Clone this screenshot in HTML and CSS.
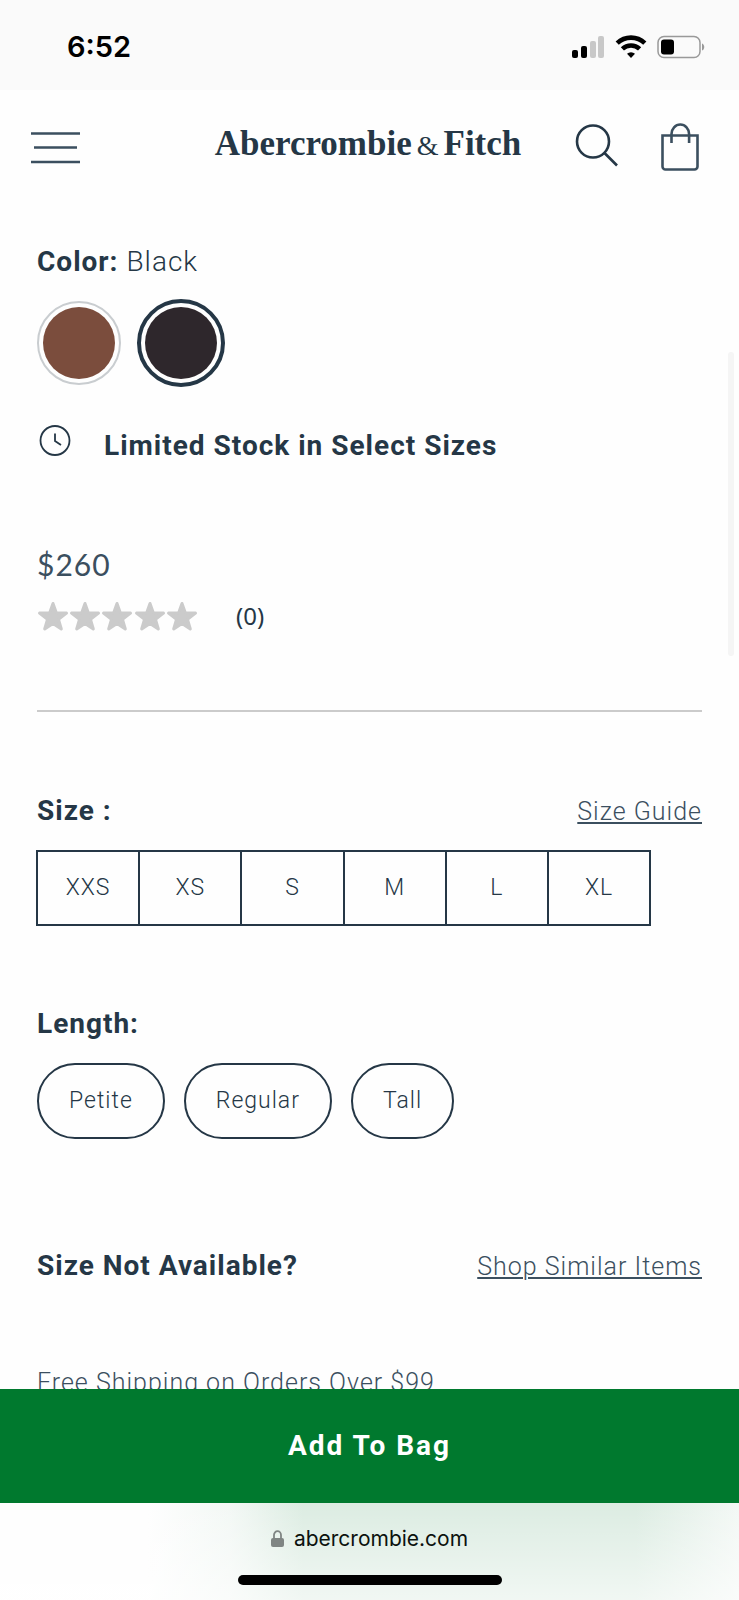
FILE: index.html
```html
<!DOCTYPE html>
<html lang="en">
<head>
    <meta charset="UTF-8">
    <meta name="viewport" content="width=device-width, initial-scale=1.0">
    <title>Abercrombie &amp; Fitch</title>
    <link rel="stylesheet" href="styles.css">
</head>
<body>

    <!-- Status Bar -->
    <div class="status-bar">
        <span class="time">6:52</span>
        <div class="status-icons">
            <svg width="34" height="24" viewBox="0 0 34 24">
                <rect x="1" y="15" width="6" height="8" rx="2" fill="#000"/>
                <rect x="10" y="11" width="6" height="12" rx="2" fill="#000"/>
                <rect x="19" y="6" width="6" height="17" rx="2" fill="#c8c8c8"/>
                <rect x="27" y="1" width="6" height="22" rx="2" fill="#c8c8c8"/>
            </svg>
            <svg width="32" height="24" viewBox="0 0 32 24" fill="none" stroke="#000" stroke-width="4.6">
                <path d="M2.2 8.1a20 20 0 0 1 27.600 0"/>
                <path d="M7.400 13.900a12.500 12.500 0 0 1 17.200 0"/>
                <path d="M16 23l-4-4.200a5.800 5.800 0 0 1 8 0z" fill="#000" stroke="none"/>
            </svg>
            <svg width="48" height="24" viewBox="0 0 48 24">
                <rect x="1" y="1.500" width="42" height="21" rx="6" fill="none" stroke="#999" stroke-width="1.500"/>
                <rect x="4" y="4.500" width="13" height="15" rx="3" fill="#000"/>
                <path d="M45 8.500c3 1 3 6 0 7z" fill="#999"/>
            </svg>
        </div>
    </div>

    <!-- Header -->
    <header class="header">
        <button class="icon-button" aria-label="Menu">
            <svg width="50" height="50" viewBox="0 0 50 50" stroke="#3b4f5f" stroke-width="2.500">
                <path d="M0 10.500h49M3 24.500h43M0 39h49"/>
            </svg>
        </button>
        <a class="logo" href="#">Abercrombie<span class="amp">&amp;</span>Fitch</a>
        <div class="header-actions">
            <button class="icon-button" aria-label="Search">
                <svg width="44" height="50" viewBox="0 0 44 50" fill="none" stroke="#253746" stroke-width="2.600">
                    <circle cx="18" cy="18.500" r="16"/>
                    <path d="M29.500 30L42 42.500"/>
                </svg>
            </button>
            <button class="icon-button" aria-label="Shopping bag">
                <svg width="38" height="50" viewBox="0 0 38 50" fill="none" stroke="#3b4f5f" stroke-width="2.600">
                    <path d="M1.500 12.500h35v31a3 3 0 0 1-3 3h-29a3 3 0 0 1-3-3z"/>
                    <path d="M10.500 20v-9a8.800 9.500 0 0 1 17.600 0v9"/>
                </svg>
            </button>
        </div>
    </header>

    <!-- Product Details -->
    <main class="product">
        <div class="product-color"><b>Color:</b> <span class="light">Black</span></div>
        <div class="swatches">
            <input class="swatch swatch-brown" type="radio" name="color" aria-label="Brown">
            <input class="swatch swatch-black" type="radio" name="color" aria-label="Black" checked>
        </div>

        <div class="stock">
            <svg width="34" height="34" viewBox="0 0 34 34" fill="none" stroke="#253746" stroke-width="1.800">
                <circle cx="18" cy="15.500" r="14.500"/>
                <path d="M18 8.500v7.500l6 4"/>
            </svg>
            <b>Limited Stock in Select Sizes</b>
        </div>

        <div class="price">$260</div>
        <div class="rating">
            <svg width="161" height="32" viewBox="0 0 161 32" fill="#cbcbcb" stroke="#cbcbcb" stroke-width="3" stroke-linejoin="round">
                <defs>
                    <path id="star" d="M16 3.500l3.300 9.200 10.200.400-8 6.200 2.800 9.700-8.300-5.600-8.300 5.600 2.800-9.700-8-6.200 10.200-.400z"/>
                </defs>
                <use href="#star" x="0"/>
                <use href="#star" x="32"/>
                <use href="#star" x="64"/>
                <use href="#star" x="97"/>
                <use href="#star" x="129"/>
            </svg>
            <span class="rating-count">(0)</span>
        </div>

        <hr class="divider">

        <div class="option-row">
            <h2>Size :</h2>
            <a href="#">Size Guide</a>
        </div>
        <div class="sizes">
            <button>XXS</button>
            <button>XS</button>
            <button>S</button>
            <button>M</button>
            <button>L</button>
            <button>XL</button>
        </div>

        <div class="option-row">
            <h2>Length:</h2>
        </div>
        <div class="lengths">
            <button>Petite</button>
            <button>Regular</button>
            <button>Tall</button>
        </div>

        <div class="option-row">
            <h2>Size Not Available?</h2>
            <a href="#">Shop Similar Items</a>
        </div>

        <p class="shipping">Free Shipping on Orders Over $99</p>
    </main>
    <div class="scroll-thumb"></div>

    <button class="add-to-bag">Add To Bag</button>

    <!-- Browser Bar -->
    <footer class="browser-bar">
        <div class="address">
            <svg width="13" height="18" viewBox="0 0 13 18">
                <rect x="0" y="8" width="13" height="9" rx="2" fill="#7f8583"/>
                <path d="M3 9V5a3.500 3.800 0 0 1 7 0v4" fill="none" stroke="#7f8583" stroke-width="1.800"/>
            </svg>
            <span>abercrombie.com</span>
        </div>
        <div class="home-indicator"></div>
    </footer>

</body>
</html>
```
FILE: styles.css
```css
/* General Styles */
* {
    box-sizing: border-box;
}

body {
    margin: 0;
    height: 100vh;
    display: flex;
    flex-direction: column;
    font-family: Roboto, "Liberation Sans", sans-serif;
    font-size: 28px;
    line-height: 36px;
    letter-spacing: 1px;
    color: #253746;
    background-color: #fefefe;
}

button {
    font: inherit;
    letter-spacing: inherit;
    color: inherit;
    background: none;
    border: none;
    padding: 0;
    cursor: pointer;
}

svg {
    display: block;
    flex-shrink: 0;
}

h2 {
    margin: 0;
    font-size: 28px;
}

/* Status Bar */
.status-bar {
    display: flex;
    justify-content: space-between;
    align-items: center;
    height: 90px;
    padding: 4px 34px 0 67px;
    background-color: #fafafa;
    color: #000;
}

.time {
    font-family: Inter, sans-serif;
    font-weight: 600;
    font-size: 29px;
    letter-spacing: 0;
}

.status-icons {
    display: flex;
    gap: 10px;
}

/* Header */
.header {
    display: grid;
    grid-template-columns: 1fr auto 1fr;
    align-items: center;
    height: 116px;
    padding: 0 40px 0 31px;
}

.icon-button {
    justify-self: start;
}

.logo {
    padding: 0 0 6px 6px;
    font-family: "Liberation Serif", serif;
    font-weight: bold;
    font-size: 35px;
    letter-spacing: 0;
    color: #253746;
    text-decoration: none;
}

.amp {
    margin: 0 5px;
    font-size: 28px;
    font-weight: normal;
}

.header-actions {
    display: flex;
    justify-content: flex-end;
    gap: 42px;
}

/* Product Details */
.product {
    flex: 1;
    min-height: 0;
    overflow: hidden;
    padding: 38px 37px 0;
}

.light {
    font-weight: 300;
}

.swatches {
    display: flex;
    align-items: center;
    gap: 16px;
    margin-top: 19px;
}

.swatch {
    appearance: none;
    margin: 0;
    width: 84px;
    height: 84px;
    padding: 4px;
    border: 2px solid #c9cdd0;
    border-radius: 50%;
    background-clip: content-box;
}

.swatch:checked {
    width: 88px;
    height: 88px;
    border: 4px solid #253746;
}

.swatch-brown {
    background-color: #7b4d3d;
}

.swatch-black {
    background-color: #2e272c;
}

.stock {
    display: flex;
    align-items: flex-start;
    gap: 33px;
    margin-top: 38px;
}

.stock b {
    padding-top: 3px;
}

.price {
    font-family: Lato, sans-serif;
    font-size: 30px;
    color: #3b4f5f;
    margin-top: 82px;
}

.rating {
    display: flex;
    align-items: center;
    gap: 38px;
    margin-top: 16px;
    font-family: "Noto Sans", sans-serif;
    font-size: 24px;
    letter-spacing: 0;
}

.divider {
    margin: 76px 0 81px;
    border: none;
    border-top: 2px solid #cbcbcb;
}

.option-row {
    display: flex;
    justify-content: space-between;
    align-items: baseline;
}

.option-row a {
    font-weight: 300;
    font-size: 25px;
    color: #3b4f5f;
    text-decoration-thickness: 2px;
    text-underline-offset: 2px;
}

/* Sizes and Lengths */
.sizes {
    display: flex;
    width: 92.5%;
    margin: 20px 0 80px -1px;
}

.sizes button,
.lengths button {
    height: 76px;
    font-size: 23px;
    font-weight: 300;
    border: 2px solid #253746;
}

.sizes button {
    flex: 1;
}

.sizes button + button {
    margin-left: -2px;
}

.lengths {
    display: flex;
    gap: 19px;
    margin: 21px 0 109px;
}

.lengths button {
    padding: 0 30px;
    border-radius: 38px;
}

.shipping {
    margin: 80px 0 0;
    font-size: 25px;
    font-weight: 300;
    color: #3b4f5f;
}

.scroll-thumb {
    position: absolute;
    top: 352px;
    right: 5px;
    width: 6px;
    height: 304px;
    border-radius: 3px;
    background-color: #f5f5f5;
}

/* Add To Bag */
.add-to-bag {
    flex-shrink: 0;
    height: 114px;
    background-color: #00792e;
    color: #fff;
    font-weight: bold;
    letter-spacing: 2px;
}

/* Browser Bar */
.browser-bar {
    display: flex;
    flex-direction: column;
    align-items: center;
    gap: 18px;
    padding: 18px 0 15px;
    background:
        linear-gradient(to bottom, transparent, rgba(255, 255, 255, 0.6)),
        linear-gradient(to right, #fefefe 20%, #f3f8f5 31%, #dcece2 41%, #dcece2 86%, #f3f8f5 100%);
}

.address {
    display: flex;
    align-items: center;
    gap: 10px;
    font-family: Inter, sans-serif;
    font-size: 21px;
    letter-spacing: 0;
    color: #0c120e;
}

.home-indicator {
    width: 264px;
    height: 10px;
    border-radius: 5px;
    background-color: #000;
}
```
